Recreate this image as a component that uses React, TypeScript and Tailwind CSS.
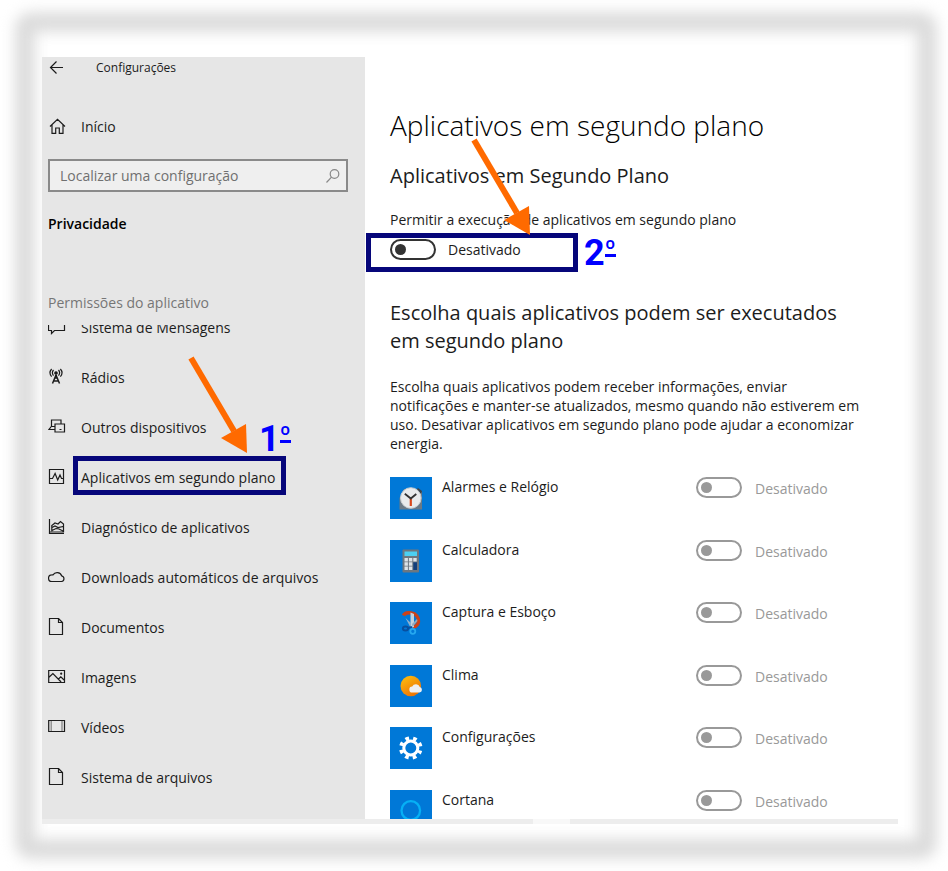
import type { ReactNode } from "react";

const stroke = {
  fill: "none",
  stroke: "currentColor",
  strokeWidth: 1.2,
} as const;

function Glyph({ children }: { children: ReactNode }) {
  return (
    <svg viewBox="0 0 18 18" className="mb-[2px] h-[18px] w-[18px] shrink-0" aria-hidden="true" {...stroke}>
      {children}
    </svg>
  );
}

const documentGlyph = (
  <Glyph>
    <path d="M1.500 .5h9l4 4v12h-13zM10.500 .5v4h4" />
  </Glyph>
);

const menu: { label: string; icon: ReactNode; marked?: boolean }[] = [
  {
    label: "Sistema de Mensagens",
    icon: (
      <Glyph>
        <path d="M.5 2h16v10.500H6.500L3.500 15.500v-3H.5z" />
      </Glyph>
    ),
  },
  {
    label: "Rádios",
    icon: (
      <Glyph>
        <path d="M8 7 4.500 15.500M8 7l3.500 8.500M5.500 13h5M6.500 10h3" strokeWidth="1.500" />
        <circle cx="8" cy="5" r="1.200" fill="currentColor" />
        <path d="M5.500 2c-1.300 1.600-1.300 4 0 5.600M3.600 1c-1.900 2.200-1.900 5.400 0 7.600M10.500 2c1.300 1.600 1.300 4 0 5.600M12.400 1c1.900 2.200 1.900 5.400 0 7.600" />
      </Glyph>
    ),
  },
  {
    label: "Outros dispositivos",
    icon: (
      <Glyph>
        <path d="M3.500 8.500V2H13V5.500M7 11.500H1l2.300-3H7M7 6h9.500v8H7zM11.500 11.500h2" />
      </Glyph>
    ),
  },
  {
    label: "Aplicativos em segundo plano",
    marked: true,
    icon: (
      <Glyph>
        <path d="M1.500 1.500h14v14h-14zM1.500 10.500h3l2.600-5 2.600 6.500 2.300-5 1.500 3.500h2" />
      </Glyph>
    ),
  },
  {
    label: "Diagnóstico de aplicativos",
    icon: (
      <Glyph>
        <path d="M1.500 1v14.500H16M1.500 14H15.500V6l-3-2.500L10 6 7 5 3.800 7.500v5.800M4 9.500l3-1.500 3 1.500 5-1M4 12.500l4-2 3 .5 4 2" />
      </Glyph>
    ),
  },
  {
    label: "Downloads automáticos de arquivos",
    icon: (
      <Glyph>
        <path d="M4 13.500a3.300 3.300 0 0 1-.3-6.600 3 3 0 0 1 1.300 0A4.800 4.800 0 0 1 13.600 7.800a2.900 2.900 0 0 1 0 5.700z" />
      </Glyph>
    ),
  },
  { label: "Documentos", icon: documentGlyph },
  {
    label: "Imagens",
    icon: (
      <Glyph>
        <path d="M.7 2.500h15.800v12H.7zM.7 9.500l4.200-4 8.200 8.500M10.500 11l2.300-2.200 3.800 3.700" />
        <circle cx="13.200" cy="5.700" r=".5" />
      </Glyph>
    ),
  },
  {
    label: "Vídeos",
    icon: (
      <Glyph>
        <path d="M.7 2.500h15.800v11H.7z" />
        <path d="M3.200 3.500v9M14 3.500v9" strokeDasharray="1 1" />
      </Glyph>
    ),
  },
  { label: "Sistema de arquivos", icon: documentGlyph },
];

const apps: { name: string; art: ReactNode }[] = [
  {
    name: "Alarmes e Relógio",
    art: (
      <>
        <path d="M9.500 21 14 12h15l3 3v17.500H9.500z" fill="#6b7a86" />
        <path d="m28 11 4 3-1 3-5-4z" fill="#39434b" />
        <circle cx="20.800" cy="21" r="10.300" fill="#e9ebec" stroke="#c9cdd0" />
        <path d="M20.800 21.500V29" stroke="#d9481c" strokeWidth="2.200" />
        <path d="m14.800 16.800 6 4.700 5.500-4.500" fill="none" stroke="#333" strokeWidth="1.800" />
      </>
    ),
  },
  {
    name: "Calculadora",
    art: (
      <>
        <rect x="12.500" y="9.500" width="16.500" height="23" rx="1" fill="#6d7780" />
        <rect x="14.500" y="11.500" width="12.500" height="4.500" fill="#4cd0f2" />
        <path d="M14.500 18h3.400v3.400h-3.400zM18.900 18h3.400v3.400h-3.400zM23.300 18h3.400v3.400h-3.400zM14.500 22.300h3.400v3.400h-3.400zM18.900 22.300h3.400v3.400h-3.400zM14.500 26.600h3.400V30h-3.400zM18.900 26.600h3.400V30h-3.400z" fill="#dde3e8" />
        <path d="M23.300 22.300h3.700V30h-3.700z" fill="#123f7c" />
      </>
    ),
  },
  {
    name: "Captura e Esboço",
    art: (
      <>
        <path d="M13.500 13.500c1-2.500 5-3 8-2.500 4 .5 7.500 4 7 8.500-.3 3-2.500 5-5.500 5.500" fill="none" stroke="#cc4218" strokeWidth="3.400" />
        <path d="M20.500 10.500 24 12v13l-3.500 1z" fill="#c5d2dc" />
        <path d="m15.500 16 5.500 5-.5 4.500z" fill="#8fb0cc" />
        <path d="m22 22 5-5 .5 2-5 6z" fill="#94aabd" />
        <ellipse cx="15.500" cy="26.500" rx="2.600" ry="2" fill="none" stroke="#084f9e" strokeWidth="2" />
        <path d="m18 26 4-1" stroke="#084f9e" strokeWidth="2" />
        <circle cx="22.800" cy="29.300" r="2.500" fill="none" stroke="#25a8f0" strokeWidth="1.800" />
      </>
    ),
  },
  {
    name: "Clima",
    art: (
      <>
        <defs>
          <linearGradient id="sun" x1="0" y1="0" x2=".6" y2="1">
            <stop offset="0" stopColor="#ffc30f" />
            <stop offset="1" stopColor="#ec7404" />
          </linearGradient>
        </defs>
        <circle cx="20.800" cy="21" r="10.300" fill="url(#sun)" />
        <path d="M22.500 27.500a3 3 0 0 1-.3-6 4.200 4.200 0 0 1 7.600.5 2.800 2.800 0 0 1-.3 5.500z" fill="#eef0f2" />
      </>
    ),
  },
  {
    name: "Configurações",
    art: (
      <g fill="none" stroke="#fff" transform="translate(20.800 21) rotate(22.500)">
        <circle r="7" strokeWidth="3" />
        <circle r="9.800" strokeWidth="3.800" strokeDasharray="3.700 3.997" strokeDashoffset="1.850" />
      </g>
    ),
  },
  {
    name: "Cortana",
    art: <circle cx="20.800" cy="20.500" r="9.300" fill="none" stroke="#06b0f5" strokeWidth="2.300" />,
  },
];

const toggle =
  "relative h-[21px] w-[46px] shrink-0 appearance-none rounded-full border-2 border-[#333] bg-white before:absolute before:top-[3px] before:left-[3px] before:size-[11px] before:rounded-full before:bg-[#333] disabled:border-[#999] disabled:before:bg-[#999]";

function Arrow({ className }: { className: string }) {
  return (
    <svg viewBox="0 0 60 100" className={`pointer-events-none absolute z-10 h-[100px] w-[60px] ${className}`} aria-hidden="true">
      <path d="M3 3 46 76" stroke="#ff6a00" strokeWidth="6" />
      <path d="M59 98 58 69 33 83z" fill="#ff6a00" />
    </svg>
  );
}

function Step({ digit, className }: { digit: string; className: string }) {
  return (
    <span
      className={`pointer-events-none absolute z-10 flex items-start font-[Roboto,sans-serif] text-[36px] leading-9 font-bold text-[#0000ff] ${className}`}
    >
      {digit}
      <span className="h-[22px] border-b-[3px] text-2xl leading-7">º</span>
    </span>
  );
}

export default function App() {
  return (
    <div className="relative isolate flex h-screen flex-col overflow-hidden bg-white pt-[57px] pr-[50px] pb-[47px] pl-[42px] font-['Open_Sans','Noto_Sans',sans-serif] text-sm text-[#1c1c1c]">
      <div className="pointer-events-none absolute top-[12px] right-[11px] bottom-[12px] left-[15px] -z-10 rounded-2xl border-[20px] border-[#dcdcdc] blur-[7px]" />
      <div className="flex min-h-0 flex-1">
        <aside className="flex w-[323px] shrink-0 flex-col bg-[#e6e6e6]">
          <header className="flex h-[22px] items-center gap-8 pl-[6px] text-xs">
            <button type="button" aria-label="Voltar">
              <svg viewBox="0 0 16 16" className="size-4" {...stroke}>
                <path d="M15 7.500H2.500M8.500 1.500l-6 6 6 6" />
              </svg>
            </button>
            <span>Configurações</span>
          </header>
          <a href="#inicio" className="mt-7 flex h-10 items-center gap-[15px] pl-[6px]">
            <Glyph>
              <path d="M2 9.500 9.500 2.300l7.500 7.200M4 8v8.300h3.700V11h3.600v5.300h3.700V8" />
            </Glyph>
            Início
          </a>
          <label className="mt-3 mr-[17px] ml-[6px] flex h-[33px] shrink-0 items-center border-2 border-[#8a8a8a] bg-[#efefef] pr-[5px] pl-[10px]">
            <input
              type="text"
              aria-label="Localizar uma configuração"
              placeholder="Localizar uma configuração"
              className="min-w-0 flex-1 bg-transparent outline-none placeholder:text-[#707070]"
            />
            <svg viewBox="0 0 16 16" className="size-4 text-[#888]" aria-hidden="true" {...stroke}>
              <circle cx="9.500" cy="6" r="4.300" />
              <path d="M6.500 9.200 1.500 14.500" />
            </svg>
          </label>
          <h2 className="mt-5 pl-[6px] leading-6 font-semibold text-black">Privacidade</h2>
          <p className="mt-14 pl-[6px] leading-[22px] text-[#767676]">Permissões do aplicativo</p>
          <nav className="mt-[11px] min-h-0 flex-1 overflow-hidden">
            <ul className="-mt-[22px]">
              {menu.map((item) => (
                <li key={item.label} className="relative">
                  <a href="#item" className="flex h-[50px] items-center gap-[15px] pl-[6px]">
                    {item.icon}
                    <span>{item.label}</span>
                  </a>
                  {item.marked && (
                    <span className="pointer-events-none absolute top-[3px] left-[31px] h-[39px] w-[213px] border-[5px] border-[#06067a]" />
                  )}
                </li>
              ))}
            </ul>
          </nav>
        </aside>

        <main className="min-w-0 flex-1 overflow-hidden pl-[25px]">
          <h1 className="mt-12 text-[28px] leading-10 font-[340] text-black">Aplicativos em segundo plano</h1>
          <h2 className="mt-[17px] text-xl leading-7">Aplicativos em Segundo Plano</h2>
          <label htmlFor="background" className="mt-5 block leading-5">
            Permitir a execução de aplicativos em segundo plano
          </label>
          <div className="relative mt-[9px] flex h-[21px] items-center gap-3">
            <input id="background" type="checkbox" className={toggle} />
            <span>Desativado</span>
            <span className="pointer-events-none absolute -top-[6px] -left-6 h-[39px] w-[212px] border-[5px] border-[#06067a]" />
            <Step digit="2" className="-top-[4px] left-[194px]" />
          </div>
          <h2 className="mt-[39px] max-w-[460px] text-xl leading-7">
            Escolha quais aplicativos podem ser executados em segundo plano
          </h2>
          <p className="mt-[22px] max-w-[475px] leading-[19px]">
            Escolha quais aplicativos podem receber informações, enviar notificações e manter-se atualizados, mesmo
            quando não estiverem em uso. Desativar aplicativos em segundo plano pode ajudar a economizar energia.
          </p>
          <ul className="mt-6 grid h-[375px] auto-rows-fr">
            {apps.map((app) => (
              <li key={app.name}>
                <label className="flex items-start">
                  <svg viewBox="0 0 42 42" className="size-[42px] shrink-0 bg-[#0078d7]" aria-hidden="true">
                    {app.art}
                  </svg>
                  <span className="w-[264px] shrink-0 pl-[10px] leading-5">{app.name}</span>
                  <input type="checkbox" disabled className={toggle} />
                  <span className="pl-[13px] leading-6 text-[#999]">Desativado</span>
                </label>
              </li>
            ))}
          </ul>
        </main>
      </div>
      <div className="flex h-[5px] shrink-0 bg-[#ededed]">
        <div className="ml-[491px] w-[37px] bg-[#f8f8f8]" />
      </div>

      <Arrow className="top-[355px] left-[188px]" />
      <Arrow className="top-[137px] left-[471px]" />
      <Step digit="1" className="top-[421px] left-[259px]" />
    </div>
  );
}
